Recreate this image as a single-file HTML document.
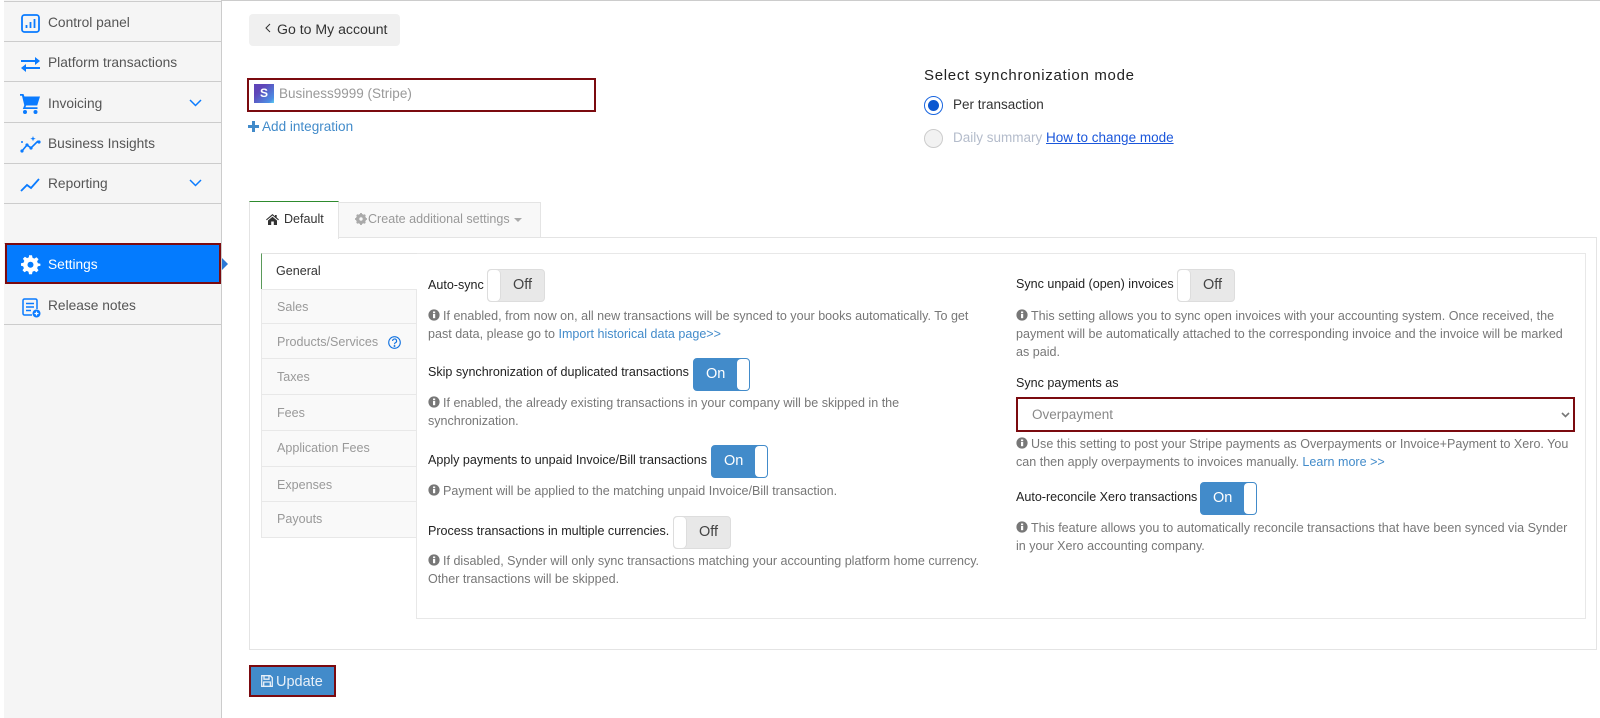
<!DOCTYPE html>
<html lang="en"><head><meta charset="utf-8"><title>Settings</title>
<style>
html,body{margin:0;padding:0;background:#fff}
body{position:relative;width:1600px;height:718px;overflow:hidden;font-family:"Liberation Sans",sans-serif;font-size:13px;color:#222}
.a,.t{position:absolute;box-sizing:border-box}
.t{white-space:nowrap;line-height:18px}
.h{color:#777;font-size:12.55px}
.l{color:#222;font-size:12.55px}
.side{left:4px;top:0;width:218px;height:718px;background:#f5f5f5;border-right:1px solid #ccc}
.item{left:4px;width:217px;height:1px;background:#ccc}
.n{font-size:13.75px;color:#555;left:48px}
.tab{left:261px;width:156px;background:#f9f9f9;border-bottom:1px solid #e8e8e8;border-right:1px solid #e8e8e8;border-left:1px solid #e8e8e8;color:#999;font-size:12.55px;padding-left:15px;line-height:35px}
.off,.on{border-radius:4px;font-size:14.5px;height:33px;line-height:31px}
.off{background:#e8e8e8;border:1px solid #ddd;color:#444;padding-left:25px;width:58px}
.off:before{content:"";position:absolute;left:0;top:0;bottom:0;width:12px;background:#fff;border-radius:4px;box-shadow:1px 0 0 #ddd}
.on{background:#428bca;border:1px solid #428bca;color:#fff;padding-left:12px;width:57px}
.on:after{content:"";position:absolute;right:0;top:0;bottom:0;width:12px;background:#fff;border-radius:4px 3px 3px 4px}
a{color:#428bca;text-decoration:none}
svg{position:absolute;overflow:visible}
.i{width:12px;height:12px;position:relative;display:inline-block;vertical-align:-1px;margin-right:3px}
</style></head><body>
<svg width="0" height="0" style="left:0;top:0"><defs><symbol id="info" viewBox="0 0 12 12"><circle cx="6" cy="6" r="5.6" fill="#777"/><rect x="5" y="5" width="2.2" height="4.2" fill="#fff"/><rect x="5" y="2.5" width="2.2" height="1.7" fill="#fff"/></symbol></defs></svg>

<div class="a" style="left:221px;top:0;width:1379px;height:1px;background:#ccc"></div>
<div class="a side"></div>
<div class="a item" style="top:1px"></div><div class="a item" style="top:41px"></div><div class="a item" style="top:81px"></div><div class="a item" style="top:122px"></div><div class="a item" style="top:163px"></div><div class="a item" style="top:203px"></div><div class="a item" style="top:243px"></div><div class="a item" style="top:324px"></div>

<svg style="left:21px;top:14px" width="19" height="19" viewBox="0 0 19 19" fill="none"><rect x="1" y="1" width="17" height="17" rx="2.5" stroke="#0a7bff" stroke-width="1.8"/><path d="M5.5 11v3M9.500 8v6M13.500 5v9" stroke="#0a7bff" stroke-width="1.800"/></svg>
<div class="t n" style="top:14px">Control panel</div>
<svg style="left:21px;top:57px" width="19" height="15" viewBox="0 0 19 15" fill="#0a7bff"><path d="M0 3h14V0l5 4-5 4V5H0zM19 10H5V7l-5 4 5 4v-3h14z"/></svg>
<div class="t n" style="top:54px">Platform transactions</div>
<svg style="left:20px;top:94px" width="20" height="20" viewBox="0 0 20 20" fill="#0a7bff"><path d="M0 0h3.500l.9 2.500H20l-2.800 9H6.200l-.8 1.700H17.500v1.800H2.800l1.500-3.800L2 1.800H0z"/><circle cx="5" cy="18" r="2"/><circle cx="15.500" cy="18" r="2"/></svg>
<div class="t n" style="top:95px">Invoicing</div>
<svg style="left:189px;top:99px" width="13" height="8" viewBox="0 0 13 8" fill="none" stroke="#0a7bff" stroke-width="1.500"><path d="M1 1l5.500 5.500L12 1"/></svg>
<svg style="left:20px;top:136px" width="21" height="17" viewBox="0 0 21 17" fill="#0a7bff"><path d="M2 15l5-6 4 3 7-7" fill="none" stroke="#0a7bff" stroke-width="1.600"/><circle cx="2" cy="15" r="1.6"/><circle cx="7" cy="9" r="1.6"/><circle cx="11" cy="12" r="1.6"/><circle cx="19" cy="6" r="1.6"/><circle cx="2" cy="6" r="1"/><path d="M13 0l.7 2 2 .7-2 .7-.7 2-.7-2-2-.7 2-.7z"/></svg>
<div class="t n" style="top:135px">Business Insights</div>
<svg style="left:21px;top:178px" width="19" height="14" viewBox="0 0 19 14" fill="none" stroke="#0a7bff" stroke-width="1.800"><path d="M0 13l6-6 4 3 8-9"/></svg>
<div class="t n" style="top:175px">Reporting</div>
<svg style="left:189px;top:179px" width="13" height="8" viewBox="0 0 13 8" fill="none" stroke="#0a7bff" stroke-width="1.500"><path d="M1 1l5.500 5.500L12 1"/></svg>

<div class="a" style="left:5px;top:243px;width:216px;height:41px;background:#047bfe;border:2px solid #7b0a0f"></div>
<div class="a" style="left:222px;top:258px;width:0;height:0;border-left:6px solid #2a78d6;border-top:6px solid transparent;border-bottom:6px solid transparent"></div>
<svg style="left:21px;top:255px" width="19" height="19" viewBox="0 0 19 19"><path d="M8 .5h3l.5 2.500 1.800.8 2.200-1.400 2 2-1.400 2.200.8 1.800 2.500.5V11l-2.500.5-.8 1.800 1.400 2.200-2 2-2.200-1.400-1.800.8-.5 2.500H8l-.5-2.500-1.800-.8-2.200 1.400-2-2 1.400-2.200-.8-1.800L0 11V8.400l2.500-.5.8-1.800-1.400-2.200 2-2 2.200 1.400 1.800-.8z" fill="#fff" transform="translate(0 -.2)"/><circle cx="9.500" cy="9.700" r="3" fill="#047bfe"/></svg>
<div class="t n" style="top:256px;color:#fff">Settings</div>
<svg style="left:22px;top:298px" width="19" height="20" viewBox="0 0 19 20" fill="none" stroke="#0a7bff" stroke-width="1.500"><path d="M10 17H2.500A1.500 1.500 0 0 1 1 15.500V2.500A1.500 1.500 0 0 1 2.500 1h11A1.500 1.500 0 0 1 15 2.500V11M4 5.500h8M4 9h8M4 12.500h5"/><circle cx="14.500" cy="15.500" r="4" fill="#0a7bff" stroke="none"/><path d="M14.500 13.500v4M12.500 15.500h4" stroke="#fff" stroke-width="1.200"/></svg>
<div class="t n" style="top:297px">Release notes</div>

<div class="a" style="left:249px;top:14px;width:151px;height:32px;background:#f0f0f0;border-radius:4px"></div>
<svg style="left:265px;top:23px" width="6" height="10" viewBox="0 0 6 10" fill="none" stroke="#333" stroke-width="1"><path d="M5 1L1 5l4 4"/></svg>
<div class="t" style="left:277px;top:20px;font-size:14.1px;color:#333">Go to My account</div>

<div class="a" style="left:247px;top:78px;width:349px;height:34px;border:2px solid #7b0a0f"></div>
<div class="a" style="left:254px;top:84px;width:20px;height:19px;background:linear-gradient(135deg,#5f45b8 30%,#4c8fe4 85%,#5fd0f0);color:#fff;font-weight:bold;font-size:12px;line-height:19px;text-align:center">S</div>
<div class="t" style="left:279px;top:85px;font-size:13.5px;color:#999">Business9999 (Stripe)</div>
<svg style="left:248px;top:121px" width="11" height="11" viewBox="0 0 11 11" fill="#428bca"><path d="M4 0h3v4h4v3H7v4H4V7H0V4h4z"/></svg>
<div class="t" style="left:262px;top:118px;font-size:13.55px;color:#428bca">Add integration</div>

<div class="t" style="left:924px;top:67px;font-size:15px;letter-spacing:.7px;color:#222">Select synchronization mode</div>
<div class="a" style="left:924px;top:96px;width:19px;height:19px;border:1.500px solid #1a66e0;border-radius:50%"></div>
<div class="a" style="left:928px;top:100px;width:11px;height:11px;background:#0b57d0;border-radius:50%"></div>
<div class="t" style="left:953px;top:96px;font-size:13.5px;color:#333">Per transaction</div>
<div class="a" style="left:924px;top:129px;width:19px;height:19px;border:1px solid #ccc;background:#f2f2f2;border-radius:50%"></div>
<div class="t" style="left:953px;top:129px;font-size:13.5px;color:#b4bccb">Daily summary <span style="color:#1a56db;text-decoration:underline">How to change mode</span></div>

<div class="a" style="left:249px;top:237px;width:1348px;height:413px;border:1px solid #e4e4e4"></div>
<div class="a" style="left:338px;top:202px;width:203px;height:36px;background:#f8f8f8;border:1px solid #e4e4e4"></div>
<div class="a" style="left:249px;top:201px;width:90px;height:38px;background:#fff;border:1px solid #e4e4e4;border-top:1px solid #2e8b2e;border-bottom:0"></div>
<svg style="left:266px;top:214px" width="13" height="11" viewBox="0 0 13 11" fill="#333"><path d="M6.500 0L0 5.500l.8.8L6.500 1.500l5.700 4.800.8-.8-2.300-2V1H9v1.200zM2 6.500V11h3.200V7.500h2.600V11H11V6.500L6.500 2.800z"/></svg>
<div class="t" style="left:284px;top:210px;font-size:12.55px;color:#333">Default</div>
<svg style="left:355px;top:213px" width="12" height="12" viewBox="0 0 12 12"><circle cx="6" cy="6" r="3.800" fill="none" stroke="#aaa" stroke-width="2.600"/><path d="M6 0v12M0 6h12M1.800 1.800l8.400 8.400M10.200 1.800l-8.400 8.400" stroke="#aaa" stroke-width="1.800"/><circle cx="6" cy="6" r="1.700" fill="#f8f8f8"/></svg>
<div class="t" style="left:368px;top:210px;font-size:12.55px;color:#999">Create additional settings</div>
<div class="a" style="left:514px;top:218px;width:0;height:0;border-top:4px solid #aaa;border-left:4px solid transparent;border-right:4px solid transparent"></div>

<div class="a" style="left:416px;top:253px;width:1170px;height:366px;border:1px solid #e8e8e8"></div>
<div class="a" style="left:261px;top:253px;width:156px;height:36px;background:#fff;border-top:1px solid #e4e4e4;border-left:1px solid #5a9a5a"></div>
<div class="t" style="left:276px;top:262px;font-size:12.55px;color:#333">General</div>
<div class="a tab" style="top:289px;height:35px;border-top:1px solid #e8e8e8">Sales</div>
<div class="a tab" style="top:324px;height:35px;line-height:36px">Products/Services</div>
<svg style="left:388px;top:336px" width="13" height="13" viewBox="0 0 13 13" fill="none" stroke="#1272e0" stroke-width="1.100"><circle cx="6.500" cy="6.500" r="5.800"/><path d="M4.600 5a2 2 0 1 1 2.800 1.800c-.6.300-.9.700-.9 1.400"/><circle cx="6.500" cy="10" r=".4"/></svg>
<div class="a tab" style="top:359px;height:36px;line-height:36px">Taxes</div>
<div class="a tab" style="top:395px;height:36px;line-height:36px">Fees</div>
<div class="a tab" style="top:431px;height:36px;line-height:34px">Application Fees</div>
<div class="a tab" style="top:467px;height:35px;line-height:36px">Expenses</div>
<div class="a tab" style="top:502px;height:36px;line-height:35px">Payouts</div>

<div class="t l" style="left:428px;top:276px">Auto-sync</div>
<div class="a off" style="left:487px;top:269px">Off</div>
<div class="t h" style="left:428px;top:307px"><svg class="i"><use href="#info"/></svg>If enabled, from now on, all new transactions will be synced to your books automatically. To get</div>
<div class="t h" style="left:428px;top:325px">past data, please go to <a>Import historical data page&gt;&gt;</a></div>

<div class="t l" style="left:428px;top:363px">Skip synchronization of duplicated transactions</div>
<div class="a on" style="left:693px;top:358px">On</div>
<div class="t h" style="left:428px;top:394px"><svg class="i"><use href="#info"/></svg>If enabled, the already existing transactions in your company will be skipped in the</div>
<div class="t h" style="left:428px;top:412px">synchronization.</div>

<div class="t l" style="left:428px;top:451px">Apply payments to unpaid Invoice/Bill transactions</div>
<div class="a on" style="left:711px;top:445px">On</div>
<div class="t h" style="left:428px;top:482px"><svg class="i"><use href="#info"/></svg>Payment will be applied to the matching unpaid Invoice/Bill transaction.</div>

<div class="t l" style="left:428px;top:522px">Process transactions in multiple currencies.</div>
<div class="a off" style="left:673px;top:516px">Off</div>
<div class="t h" style="left:428px;top:552px"><svg class="i"><use href="#info"/></svg>If disabled, Synder will only sync transactions matching your accounting platform home currency.</div>
<div class="t h" style="left:428px;top:570px">Other transactions will be skipped.</div>

<div class="t l" style="left:1016px;top:275px">Sync unpaid (open) invoices</div>
<div class="a off" style="left:1177px;top:269px">Off</div>
<div class="t h" style="left:1016px;top:307px"><svg class="i"><use href="#info"/></svg>This setting allows you to sync open invoices with your accounting system. Once received, the</div>
<div class="t h" style="left:1016px;top:325px">payment will be automatically attached to the corresponding invoice and the invoice will be marked</div>
<div class="t h" style="left:1016px;top:343px">as paid.</div>

<div class="t l" style="left:1016px;top:374px">Sync payments as</div>
<div class="a" style="left:1016px;top:397px;width:559px;height:35px;border:2px solid #7b0a0f"></div>
<div class="t" style="left:1032px;top:406px;font-size:13.5px;color:#888">Overpayment</div>
<svg style="left:1561px;top:412px" width="9" height="6" viewBox="0 0 9 6" fill="none" stroke="#777" stroke-width="1.600"><path d="M1 1l3.500 3.500L8 1"/></svg>
<div class="t h" style="left:1016px;top:435px"><svg class="i"><use href="#info"/></svg>Use this setting to post your Stripe payments as Overpayments or Invoice+Payment to Xero. You</div>
<div class="t h" style="left:1016px;top:453px">can then apply overpayments to invoices manually. <a>Learn more &gt;&gt;</a></div>

<div class="t l" style="left:1016px;top:488px">Auto-reconcile Xero transactions</div>
<div class="a on" style="left:1200px;top:482px">On</div>
<div class="t h" style="left:1016px;top:519px"><svg class="i"><use href="#info"/></svg>This feature allows you to automatically reconcile transactions that have been synced via Synder</div>
<div class="t h" style="left:1016px;top:537px">in your Xero accounting company.</div>

<div class="a" style="left:249px;top:665px;width:87px;height:32px;background:#428bca;border:2px solid #7b0a0f"></div>
<svg style="left:261px;top:675px" width="12" height="12" viewBox="0 0 12 12" fill="none" stroke="#e8f0f8" stroke-width="1.300"><path d="M.7.7h8.500l2.100 2.100v8.500H.7zM3 .7v3.500h5V.7M2.700 11.300V7h6.600v4.300"/></svg>
<div class="t" style="left:276px;top:673px;font-size:14.5px;color:#e8f0f8">Update</div>
</body></html>
